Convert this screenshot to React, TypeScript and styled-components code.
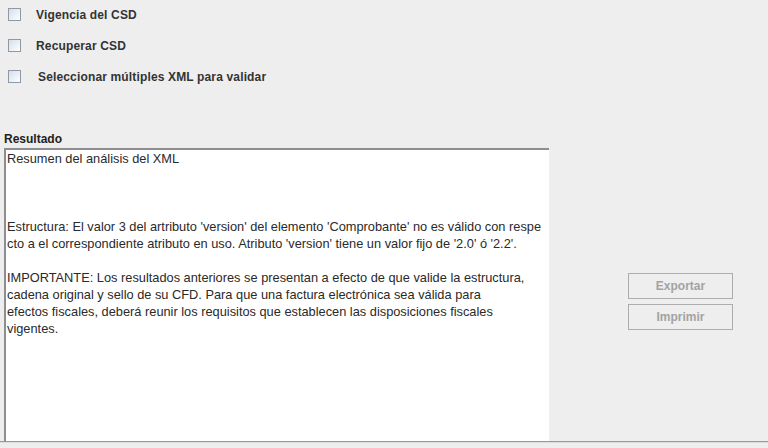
import styled, { createGlobalStyle } from "styled-components";

const GlobalStyle = createGlobalStyle`
  html, body {
    margin: 0;
    padding: 0;
    background: #eeeeee;
    overflow: hidden;
  }
  body {
    font-family: "Liberation Sans", Arial, sans-serif;
    font-size: 12px;
  }
`;

const options = [
  { label: "Vigencia del CSD", indent: 15 },
  { label: "Recuperar CSD", indent: 15 },
  { label: "Seleccionar múltiples XML para validar", indent: 17 },
];

const resultText = `Resumen del análisis del XML



Estructura: El valor 3 del artributo 'version' del elemento 'Comprobante' no es válido con respe
cto a el correspondiente atributo en uso. Atributo 'version' tiene un valor fijo de '2.0' ó '2.2'.

IMPORTANTE: Los resultados anteriores se presentan a efecto de que valide la estructura,
cadena original y sello de su CFD. Para que una factura electrónica sea válida para
efectos fiscales, deberá reunir los requisitos que establecen las disposiciones fiscales
vigentes.`;

export default function App() {
  return (
    <Window>
      <GlobalStyle />
      <OptionList>
        {options.map((o) => (
          <OptionRow key={o.label}>
            <CheckBox />
            <OptionLabel $indent={o.indent}>{o.label}</OptionLabel>
          </OptionRow>
        ))}
      </OptionList>

      <ResultSection>
        <ResultColumn>
          <SectionTitle>Resultado</SectionTitle>
          <ResultArea>{resultText}</ResultArea>
        </ResultColumn>

        <ButtonColumn>
          <ActionButton disabled>Exportar</ActionButton>
          <ActionButton disabled>Imprimir</ActionButton>
        </ButtonColumn>
      </ResultSection>

      <Footer />
    </Window>
  );
}

const Window = styled.div`
  width: 768px;
  height: 448px;
  display: flex;
  flex-direction: column;
  background: #eeeeee;
`;

const OptionList = styled.div`
  display: flex;
  flex-direction: column;
  gap: 18px;
  padding: 8px 0 0 8px;
`;

const OptionRow = styled.div`
  display: flex;
  align-items: center;
  height: 13px;
`;

const CheckBox = styled.span`
  box-sizing: border-box;
  width: 13px;
  height: 13px;
  border: 1px solid #8f99a6;
  background: linear-gradient(135deg, #d6deea 0%, #eef2f7 60%, #ffffff 100%);
`;

const OptionLabel = styled.span<{ $indent: number }>`
  margin-left: ${({ $indent }) => $indent}px;
  font-weight: bold;
  color: #333333;
  line-height: 14px;
  letter-spacing: 0.15px;
`;

const ResultSection = styled.div`
  display: flex;
  margin-top: 49px;
  border-bottom: 1px solid #9a9a9a;
`;

const ResultColumn = styled.div`
  display: flex;
  flex-direction: column;
  padding-left: 4px;
`;

const SectionTitle = styled.div`
  font-weight: bold;
  color: #222222;
  line-height: 14px;
  height: 14px;
  margin-bottom: 2px;
`;

const ResultArea = styled.div`
  box-sizing: border-box;
  width: 545px;
  height: 293px;
  background: #ffffff;
  border-top: 2px solid #8e8e8e;
  border-left: 2px solid #8e8e8e;
  padding: 0 0 0 1px;
  color: #2a2a2a;
  font-size: 12.8px;
  line-height: 17px;
  white-space: pre;
  overflow: hidden;
`;

const ButtonColumn = styled.div`
  display: flex;
  flex-direction: column;
  gap: 5px;
  padding: 141px 0 0 79px;
`;

const ActionButton = styled.button`
  box-sizing: border-box;
  width: 105px;
  height: 26px;
  border: 1px solid #adadad;
  background: #eeeeee;
  color: #a3a3a3;
  font-family: "Liberation Sans", Arial, sans-serif;
  font-size: 12px;
  font-weight: bold;
  padding: 0;
`;

const Footer = styled.div`
  flex: 1;
  border-top: 1px solid #dcdcdc;
  background: #eeeeee;
`;
